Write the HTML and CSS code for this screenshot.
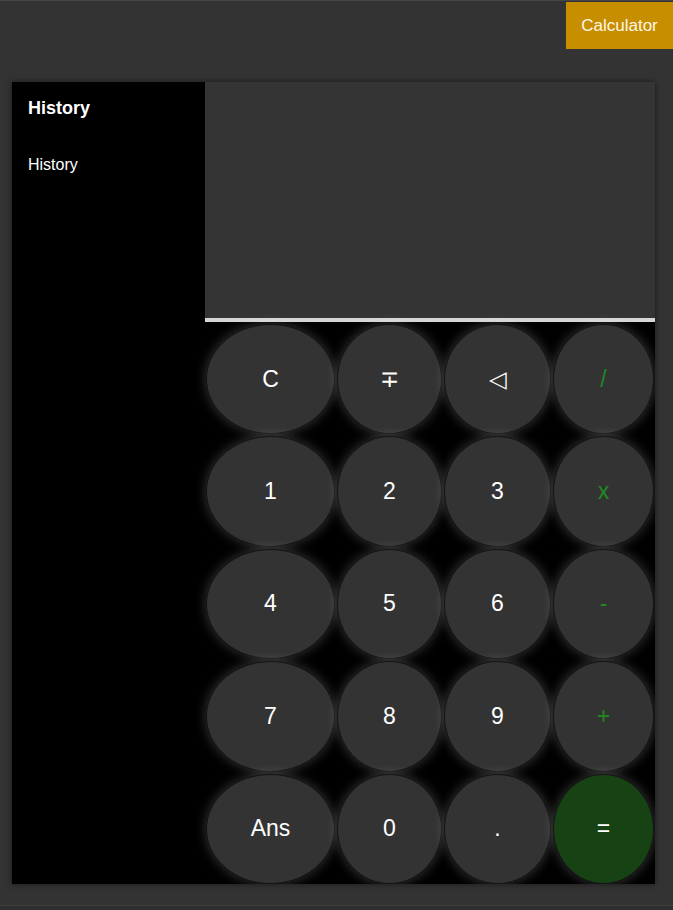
FILE: index.html
```html
<!DOCTYPE html>
<html lang="en">
<head>
<meta charset="utf-8">
<title>Calculator</title>
<link rel="stylesheet" href="styles.css">
</head>
<body>
<div class="page">
  <header class="topbar">
    <button class="nav-btn">Calculator</button>
  </header>
  <main class="calc">
    <aside class="history">
      <h2 class="history-title">History</h2>
      <p class="history-item">History</p>
    </aside>
    <section class="main">
      <div class="display"></div>
      <div class="keys">
        <button class="key">C</button>
        <button class="key">∓</button>
        <button class="key">◁</button>
        <button class="key op">/</button>
        <button class="key">1</button>
        <button class="key">2</button>
        <button class="key">3</button>
        <button class="key op">x</button>
        <button class="key">4</button>
        <button class="key">5</button>
        <button class="key">6</button>
        <button class="key op">-</button>
        <button class="key">7</button>
        <button class="key">8</button>
        <button class="key">9</button>
        <button class="key op">+</button>
        <button class="key">Ans</button>
        <button class="key">0</button>
        <button class="key">.</button>
        <button class="key eq">=</button>
      </div>
    </section>
  </main>
  <footer class="footer"></footer>
</div>
</body>
</html>
```
FILE: styles.css
```css
* { box-sizing: border-box; }
html, body {
  margin: 0;
  padding: 0;
  background: #333333;
  font-family: "Liberation Sans", Arial, sans-serif;
  height: 100%;
}
.page {
  height: 910px;
  border-top: 1px solid #454545;
  display: flex;
  flex-direction: column;
}
.topbar {
  display: flex;
  justify-content: flex-end;
  padding-top: 1px;
  height: 48px;
}
.nav-btn {
  width: 107px;
  height: 47px;
  background: #c78e00;
  color: #fff7e6;
  border: none;
  font-family: "Liberation Sans", Arial, sans-serif;
  font-size: 17px;
  padding: 0;
}
.calc {
  margin: 33px 0 0 12px;
  width: 643px;
  height: 802px;
  display: flex;
  background: #000;
  box-shadow: 0 0 6px rgba(0,0,0,0.5);
  overflow: hidden;
}
.history {
  width: 193px;
  flex: none;
  background: #000;
  color: #fff;
  padding: 15px 16px;
}
.history-title {
  margin: 0;
  font-size: 18px;
  font-weight: bold;
  line-height: 22px;
}
.history-item {
  margin: 36px 0 0;
  font-size: 16px;
  line-height: 20px;
}
.main {
  width: 450px;
  flex: none;
  display: flex;
  flex-direction: column;
}
.display {
  height: 236px;
  background: #343434;
  border-bottom: 4px solid #d6d6d6;
  flex: none;
  box-sizing: content-box;
}
.keys {
  flex: 1;
  display: grid;
  grid-template-columns: 129px 105px 107px 101px;
  grid-template-rows: repeat(5, 110.4px);
  column-gap: 2px;
  row-gap: 2px;
  padding: 2px 0 0 1px;
  background: #000;
}
.key {
  border-radius: 50%;
  background: #333333;
  border: 1px solid #151515;
  color: #ffffff;
  font-family: "Liberation Sans", Arial, sans-serif;
  font-size: 23px;
  padding: 0;
  box-shadow: 0 0 12px rgba(255,255,255,0.22);
}
.key.op { color: #1f8a1f; }
.key.eq { background: #174214; color: #ffffff; }
.footer {
  margin-top: auto;
  height: 5px;
  border-top: 1px solid #3d3d3d;
  background: #2e2e2e;
}
```
